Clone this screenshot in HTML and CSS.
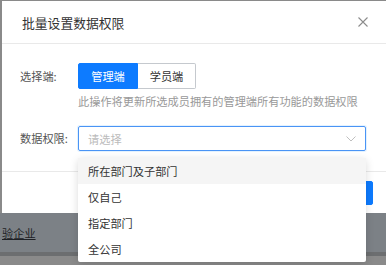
FILE: index.html
```html
<!DOCTYPE html>
<html lang="zh-CN">
<head>
    <meta charset="UTF-8">
    <meta name="viewport" content="width=device-width, initial-scale=1.0">
    <title>批量设置数据权限</title>
    <link rel="stylesheet" href="styles.css">
</head>
<body>
    <!-- Modal -->
    <div class="modal">
        <div class="modal-header">
            <span class="modal-title">批量设置数据权限</span>
            <svg class="close" width="10" height="10" viewBox="0 0 10 10">
                <path d="M0.5 0.5 L9.5 9.5 M9.5 0.5 L0.5 9.5" stroke="#8c8c8c" stroke-width="1.1" fill="none"/>
            </svg>
        </div>
        <div class="modal-body">
            <div class="form-row">
                <label class="form-label">选择端:</label>
                <div class="form-control">
                    <div class="seg">
                        <button class="seg-btn active">管理端</button>
                        <button class="seg-btn">学员端</button>
                    </div>
                    <p class="hint">此操作将更新所选成员拥有的管理端所有功能的数据权限</p>
                </div>
            </div>
            <div class="form-row select-row">
                <label class="form-label">数据权限:</label>
                <div class="form-control">
                    <div class="select">
                        <span class="placeholder">请选择</span>
                        <svg class="arrow" width="10" height="6" viewBox="0 0 10 6">
                            <path d="M0.5 0.5 L5 5 L9.5 0.5" stroke="#bfbfbf" stroke-width="1" fill="none"/>
                        </svg>
                    </div>
                </div>
            </div>
        </div>
        <div class="modal-footer">
            <button class="btn">取消</button>
            <button class="btn btn-primary">确定</button>
        </div>
    </div>

    <!-- Page behind the mask -->
    <div class="behind">
        <a class="company">验企业</a>
    </div>
    <div class="band"></div>

    <!-- Select dropdown -->
    <ul class="dropdown">
        <li class="hover">所在部门及子部门</li>
        <li>仅自己</li>
        <li>指定部门</li>
        <li>全公司</li>
    </ul>
</body>
</html>
```

FILE: styles.css
```css
* {
    margin: 0;
    padding: 0;
    box-sizing: border-box;
}
body {
    font-family: "Noto Sans CJK SC", "Noto Sans", sans-serif;
    background: #8a8a8a;
    color: #333;
    overflow: hidden;
    position: relative;
    width: 386px;
    height: 265px;
}

/* Modal */
.modal {
    margin: 1px 0 0 2px;
    height: 212px;
    background: #fff;
    display: flex;
    flex-direction: column;
}
.modal-header {
    height: 43px;
    padding: 0 18px 0 20px;
    display: flex;
    align-items: center;
    justify-content: space-between;
    border-bottom: 1px solid #e9e9e9;
}
.modal-title {
    font-size: 12.8px;
    color: #333;
}
.close {
    display: block;
}
.modal-body {
    padding: 19px 20px 20px 18px;
}
.form-row {
    display: flex;
}
.form-label {
    width: 58px;
    font-size: 11.2px;
    color: #555;
    line-height: 26px;
}
.form-control {
    flex: 1;
}
.select-row {
    margin-top: 17px;
}
.select-row .form-label {
    line-height: 25px;
}

/* Segmented buttons */
.seg {
    display: flex;
}
.seg-btn {
    height: 26px;
    width: 58px;
    font-family: inherit;
    font-size: 11.2px;
    color: #333;
    background: #fff;
    border: 1px solid #c5c9ce;
    border-left: none;
    border-radius: 0 2px 2px 0;
}
.seg-btn.active {
    width: 60px;
    color: #fff;
    background: #0d7bff;
    border: 1px solid #0d7bff;
    border-radius: 2px 0 0 2px;
}
.hint {
    margin-top: 4px;
    font-size: 11.2px;
    line-height: 16px;
    color: #999;
}

/* Select */
.select {
    height: 25px;
    border: 1px solid #4a94f5;
    border-radius: 2px;
    box-shadow: 0 0 0 1px rgba(24, 144, 255, 0.12);
    display: flex;
    align-items: center;
    justify-content: space-between;
    padding: 0 9px 0 9px;
}
.placeholder {
    font-size: 11.2px;
    color: #bbb;
}
.arrow {
    display: block;
}

/* Footer */
.modal-footer {
    flex: 1;
    border-top: 1px solid #e9e9e9;
    display: flex;
    justify-content: flex-end;
    align-items: center;
    gap: 8px;
    padding: 0 13px 0 0;
}
.btn {
    height: 24px;
    width: 52px;
    font-family: inherit;
    font-size: 11.2px;
    background: #fff;
    border: 1px solid #d9d9d9;
    border-radius: 2px;
    color: #333;
}
.btn-primary {
    background: #0d7bff;
    border-color: #0d7bff;
    color: #fff;
}

/* Page behind the mask */
.behind {
    height: 39px;
    background: #7c8186;
    display: flex;
    align-items: center;
    padding-top: 1px;
}
.company {
    margin-left: 2px;
    font-size: 11.2px;
    color: #1e2125;
    text-decoration: underline;
}
.band {
    height: 4px;
    background: #6c6e70;
}

/* Dropdown */
.dropdown {
    position: absolute;
    top: 158px;
    left: 78px;
    width: 288px;
    list-style: none;
    background: #fff;
    border-radius: 2px;
    box-shadow: 0 2px 8px rgba(0, 0, 0, 0.15);
}
.dropdown li {
    height: 26px;
    line-height: 26px;
    padding-left: 10px;
    font-size: 11.2px;
    color: #333;
}
.dropdown li.hover {
    background: #f5f5f5;
}
```
